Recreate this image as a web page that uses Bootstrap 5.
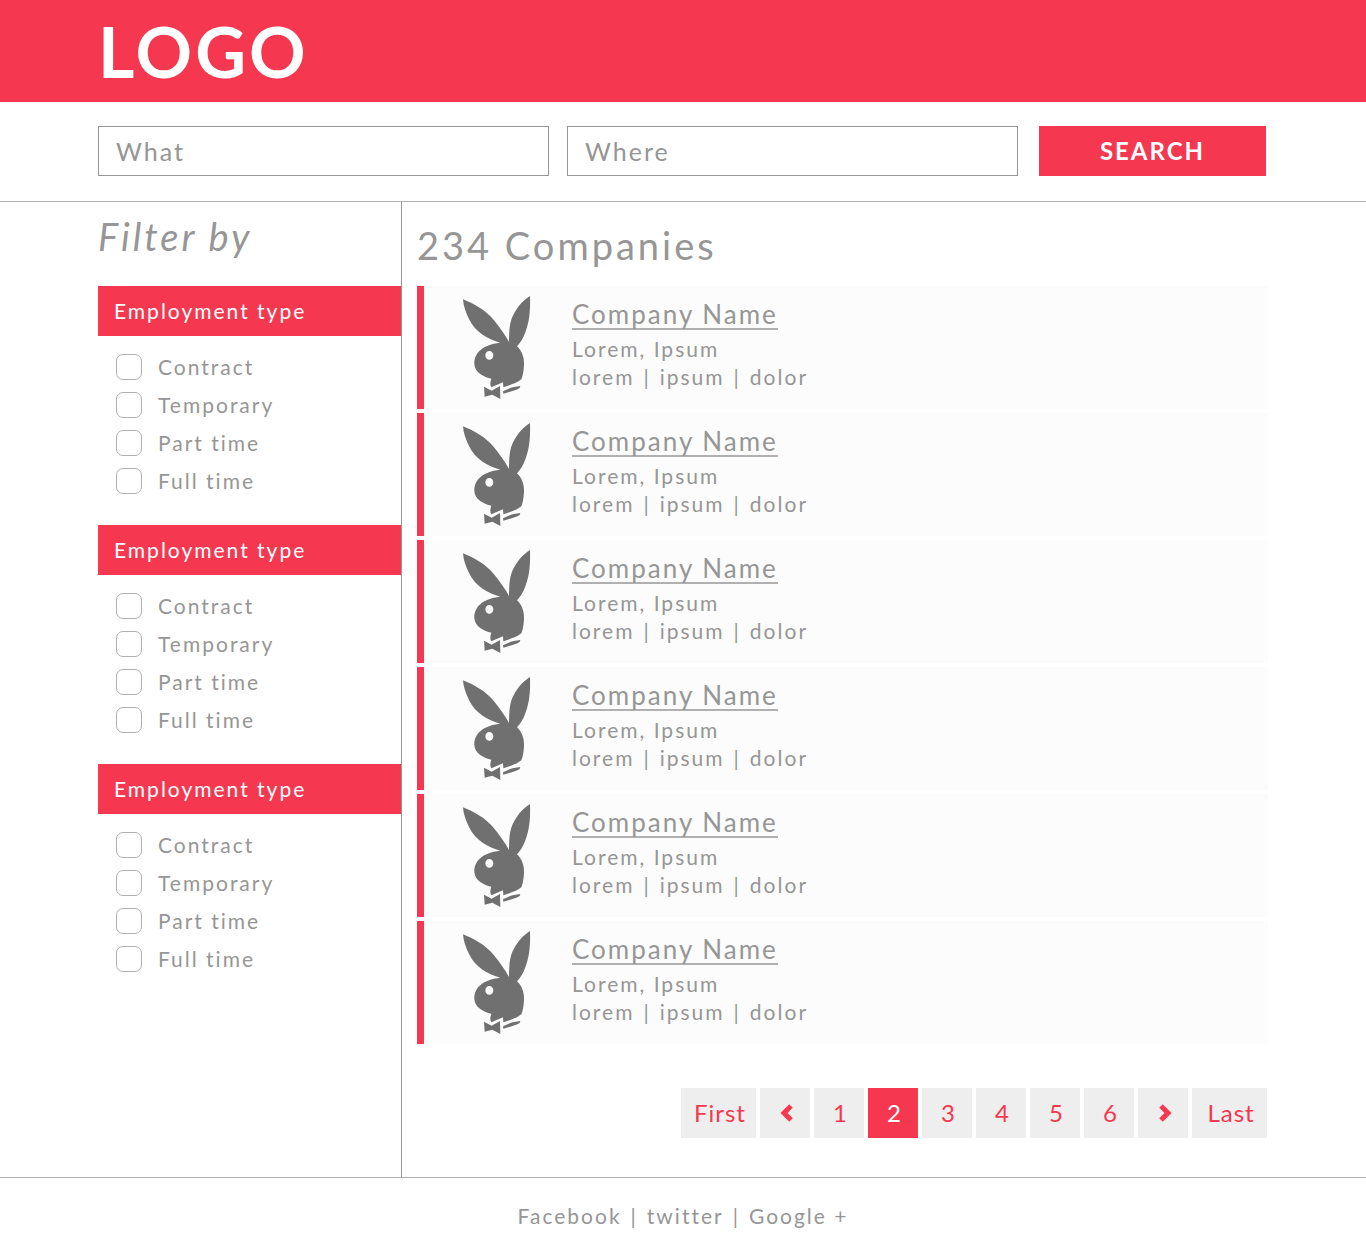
<!DOCTYPE html>
<html lang="en">
<head>
<meta charset="utf-8">
<meta name="viewport" content="width=device-width, initial-scale=1">
<title>Companies</title>
<link href="https://cdn.jsdelivr.net/npm/bootstrap@5.3.0/dist/css/bootstrap.min.css" rel="stylesheet">
<style>
:root { --brand: #f5384f; --ink: #969696; --rule: #b0b0b0; }
body { font-family: "Century Gothic", Lato, sans-serif; font-weight: 400; font-size: 21px; line-height: 28px; letter-spacing: 2px; color: var(--ink); }
a { color: inherit; }
.page-wrap { max-width: 1170px; padding: 0; }
.brand-bar { background: var(--brand); }
.brand-name { font-size: 70px; line-height: 102px; font-weight: 700; letter-spacing: 3px; color: #fff; text-decoration: none; }
.search-bar { border-bottom: 1px solid var(--rule); padding: 24px 0 25px; }
.search-grid { gap: 18px; padding-right: 2px; }
.search-grid .form-control { height: 50px; border: 1px solid var(--ink); border-radius: 0; font-size: 25px; font-weight: 400; letter-spacing: 2px; padding: 0 17px; color: var(--ink); }
.search-grid .form-control::placeholder { color: var(--ink); opacity: 1; }
.search-grid .btn { flex: 0 0 227px; height: 50px; margin-left: 3px; padding: 0; background: var(--brand); border: 0; border-radius: 0; color: #fff; font-size: 24px; font-weight: 700; letter-spacing: 2px; }
.filters { flex: 0 0 304px; border-right: 1px solid var(--ink); }
.page-title { font-size: 38px; line-height: 48px; font-weight: 400; letter-spacing: 3px; margin: 0; }
.filters .page-title { padding: 10px 0 26px; font-style: italic; }
.filter-title { background: var(--brand); color: #fff; font-size: 21px; line-height: 50px; font-weight: 400; padding: 0 16px; margin: 0; width: 100%; float: none; }
.filter-set { margin-bottom: 31px; }
.filter-list { padding: 18px 18px 0; gap: 12px; }
.filter-list .form-check { display: flex; align-items: center; gap: 16px; padding: 0; margin: 0; min-height: 26px; height: 26px; }
.filter-list .form-check-input { flex: none; width: 26px; height: 26px; margin: 0; border: 1px solid var(--rule); border-radius: 7px; }
.results { padding: 19px 0 39px 15px; }
.results .page-title { padding-bottom: 17px; }
.company-list { gap: 4px; }
.company { height: 123px; background: #fcfcfc; border-left: 7px solid var(--brand); padding: 9px 38px; gap: 41px; }
.company svg { flex: none; width: 69px; height: 105px; fill: #707070; }
.company-name { font-size: 26px; line-height: 30px; font-weight: 400; margin: 4px 0 5px; }
.company-name a { display: inline-block; text-decoration: none; border-bottom: 2px solid var(--rule); line-height: 28px; }
.link-row { display: flex; gap: 9px; }
.pagination { gap: 4px; margin: 44px 1px 0 0; }
.pagination .page-item .page-link { width: 50px; height: 50px; padding: 0 0 0 3px; border: 0; border-radius: 0; margin: 0; display: flex; align-items: center; justify-content: center; background: #eee; color: var(--brand); font-size: 24px; letter-spacing: 1px; }
.pagination .page-item:first-child .page-link, .pagination .page-item:last-child .page-link { width: 75px; }
.pagination .page-item.active .page-link { background: var(--brand); color: #fff; }
.pagination svg { width: 14px; height: 18px; fill: none; stroke: currentColor; stroke-width: 5; }
.site-footer { border-top: 1px solid var(--rule); padding: 24px 0 20px; }
.site-footer a { text-decoration: none; }
</style>
</head>
<body>
<svg class="d-none" aria-hidden="true">
  <symbol id="rabbit" viewBox="66 30 207 315">
    <path fill-rule="evenodd" d="M69 43C100 55 137 75 162 106C180 128 195 150 207 171C208 140 207 110 223 84C235 62 252 44 270 33C271 70 270 106 256 142C250 160 241 174 231 184C247 199 253 219 252 241C251 257 249 272 244 283C231 294 208 301 190 307L189 292L154 307C150 301 150 292 154 281C132 276 104 263 103 237C102 207 124 179 181 173C145 164 106 142 87 102C78 84 70 63 69 43ZM148 198A12 13 0 1 0 148 224A12 13 0 1 0 148 198Z"/>
    <path d="M132 305L155 317L180 303L181 342L157 329L134 335ZM189 319C204 310 222 305 241 303L239 309C224 318 206 321 190 326Z"/>
  </symbol>
</svg>

<header class="brand-bar">
  <div class="container page-wrap"><a class="brand-name d-block" href="#">LOGO</a></div>
</header>

<div class="search-bar">
  <form class="container page-wrap search-grid d-flex">
    <input class="form-control" type="text" placeholder="What" aria-label="What">
    <input class="form-control" type="text" placeholder="Where" aria-label="Where">
    <button class="btn" type="submit">SEARCH</button>
  </form>
</div>

<main class="container page-wrap d-flex">
  <aside class="filters">
    <h2 class="page-title">Filter by</h2>
    <fieldset class="filter-set">
      <legend class="filter-title">Employment type</legend>
      <div class="filter-list d-flex flex-column">
        <div class="form-check"><input class="form-check-input" type="checkbox" id="a1"><label for="a1">Contract</label></div>
        <div class="form-check"><input class="form-check-input" type="checkbox" id="a2"><label for="a2">Temporary</label></div>
        <div class="form-check"><input class="form-check-input" type="checkbox" id="a3"><label for="a3">Part time</label></div>
        <div class="form-check"><input class="form-check-input" type="checkbox" id="a4"><label for="a4">Full time</label></div>
      </div>
    </fieldset>
    <fieldset class="filter-set">
      <legend class="filter-title">Employment type</legend>
      <div class="filter-list d-flex flex-column">
        <div class="form-check"><input class="form-check-input" type="checkbox" id="b1"><label for="b1">Contract</label></div>
        <div class="form-check"><input class="form-check-input" type="checkbox" id="b2"><label for="b2">Temporary</label></div>
        <div class="form-check"><input class="form-check-input" type="checkbox" id="b3"><label for="b3">Part time</label></div>
        <div class="form-check"><input class="form-check-input" type="checkbox" id="b4"><label for="b4">Full time</label></div>
      </div>
    </fieldset>
    <fieldset class="filter-set">
      <legend class="filter-title">Employment type</legend>
      <div class="filter-list d-flex flex-column">
        <div class="form-check"><input class="form-check-input" type="checkbox" id="c1"><label for="c1">Contract</label></div>
        <div class="form-check"><input class="form-check-input" type="checkbox" id="c2"><label for="c2">Temporary</label></div>
        <div class="form-check"><input class="form-check-input" type="checkbox" id="c3"><label for="c3">Part time</label></div>
        <div class="form-check"><input class="form-check-input" type="checkbox" id="c4"><label for="c4">Full time</label></div>
      </div>
    </fieldset>
  </aside>

  <section class="results flex-grow-1">
    <h1 class="page-title">234 Companies</h1>
    <div class="company-list d-flex flex-column">
      <article class="company d-flex"><svg aria-hidden="true"><use href="#rabbit"/></svg><div><h3 class="company-name"><a href="#">Company Name</a></h3><div>Lorem, Ipsum</div><div class="link-row"><span>lorem</span><span>|</span><span>ipsum</span><span>|</span><span>dolor</span></div></div></article>
      <article class="company d-flex"><svg aria-hidden="true"><use href="#rabbit"/></svg><div><h3 class="company-name"><a href="#">Company Name</a></h3><div>Lorem, Ipsum</div><div class="link-row"><span>lorem</span><span>|</span><span>ipsum</span><span>|</span><span>dolor</span></div></div></article>
      <article class="company d-flex"><svg aria-hidden="true"><use href="#rabbit"/></svg><div><h3 class="company-name"><a href="#">Company Name</a></h3><div>Lorem, Ipsum</div><div class="link-row"><span>lorem</span><span>|</span><span>ipsum</span><span>|</span><span>dolor</span></div></div></article>
      <article class="company d-flex"><svg aria-hidden="true"><use href="#rabbit"/></svg><div><h3 class="company-name"><a href="#">Company Name</a></h3><div>Lorem, Ipsum</div><div class="link-row"><span>lorem</span><span>|</span><span>ipsum</span><span>|</span><span>dolor</span></div></div></article>
      <article class="company d-flex"><svg aria-hidden="true"><use href="#rabbit"/></svg><div><h3 class="company-name"><a href="#">Company Name</a></h3><div>Lorem, Ipsum</div><div class="link-row"><span>lorem</span><span>|</span><span>ipsum</span><span>|</span><span>dolor</span></div></div></article>
      <article class="company d-flex"><svg aria-hidden="true"><use href="#rabbit"/></svg><div><h3 class="company-name"><a href="#">Company Name</a></h3><div>Lorem, Ipsum</div><div class="link-row"><span>lorem</span><span>|</span><span>ipsum</span><span>|</span><span>dolor</span></div></div></article>
    </div>
    <nav aria-label="Result pages">
      <ul class="pagination justify-content-end">
        <li class="page-item"><a class="page-link" href="#">First</a></li>
        <li class="page-item"><a class="page-link" href="#" aria-label="Previous"><svg viewBox="0 0 14 18"><path d="M11 2L4 9L11 16"/></svg></a></li>
        <li class="page-item"><a class="page-link" href="#">1</a></li>
        <li class="page-item active"><a class="page-link" href="#" aria-current="page">2</a></li>
        <li class="page-item"><a class="page-link" href="#">3</a></li>
        <li class="page-item"><a class="page-link" href="#">4</a></li>
        <li class="page-item"><a class="page-link" href="#">5</a></li>
        <li class="page-item"><a class="page-link" href="#">6</a></li>
        <li class="page-item"><a class="page-link" href="#" aria-label="Next"><svg viewBox="0 0 14 18"><path d="M3 2L10 9L3 16"/></svg></a></li>
        <li class="page-item"><a class="page-link" href="#">Last</a></li>
      </ul>
    </nav>
  </section>
</main>

<footer class="site-footer">
  <div class="link-row justify-content-center"><a href="#">Facebook</a><span>|</span><a href="#">twitter</a><span>|</span><a href="#">Google +</a></div>
</footer>
<script src="https://cdn.jsdelivr.net/npm/bootstrap@5.3.0/dist/js/bootstrap.bundle.min.js"></script>
</body>
</html>
